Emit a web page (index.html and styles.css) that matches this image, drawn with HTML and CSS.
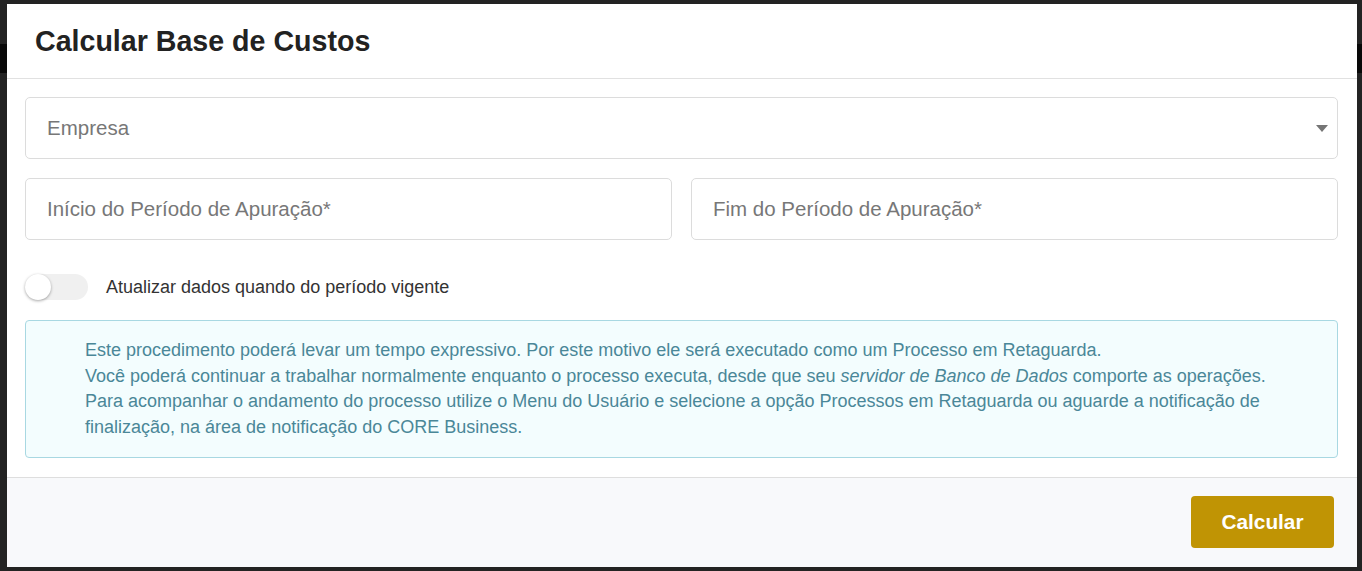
FILE: index.html
```html
<!DOCTYPE html>
<html lang="pt-BR">
<head>
<meta charset="utf-8">
<title>Calcular Base de Custos</title>
<link rel="stylesheet" href="styles.css">
</head>
<body>
<div class="backdrop">
  <div class="band"></div>
</div>
<div class="modal">
  <div class="modal-header">
    <h1 class="modal-title">Calcular Base de Custos</h1>
  </div>
  <div class="modal-body">
    <div class="field select-field">
      <span class="placeholder">Empresa</span>
      <svg class="caret" width="12" height="7" viewBox="0 0 12 7"><path d="M0 0H12L6 7Z" fill="#757575"/></svg>
    </div>
    <div class="row">
      <div class="field"><span class="placeholder">Início do Período de Apuração*</span></div>
      <div class="field"><span class="placeholder">Fim do Período de Apuração*</span></div>
    </div>
    <div class="toggle-row">
      <span class="switch"><span class="knob"></span></span>
      <span class="toggle-label">Atualizar dados quando do período vigente</span>
    </div>
    <div class="alert">
      <p>Este procedimento poderá levar um tempo expressivo. Por este motivo ele será executado como um Processo em Retaguarda.</p>
      <p>Você poderá continuar a trabalhar normalmente enquanto o processo executa, desde que seu <em>servidor de Banco de Dados</em> comporte as operações.</p>
      <p>Para acompanhar o andamento do processo utilize o Menu do Usuário e selecione a opção Processos em Retaguarda ou aguarde a notificação de finalização, na área de notificação do CORE Business.</p>
    </div>
  </div>
  <div class="modal-footer">
    <button class="btn-primary" type="button">Calcular</button>
  </div>
</div>
</body>
</html>
```
FILE: styles.css
```css
* { box-sizing: border-box; }
html, body {
  margin: 0;
  padding: 0;
  width: 1362px;
  height: 571px;
  overflow: hidden;
}
body {
  background: #222222;
  font-family: "Liberation Sans", Arial, sans-serif;
  position: relative;
}
.backdrop {
  position: absolute;
  inset: 0;
  background: #232323;
}
.band {
  position: absolute;
  left: 0;
  right: 0;
  top: 44px;
  height: 29px;
  background: #080808;
}
.modal {
  position: absolute;
  left: 7px;
  top: 4px;
  width: 1350px;
  height: 563px;
  background: #ffffff;
  display: flex;
  flex-direction: column;
}
.modal-header {
  height: 75px;
  border-bottom: 1px solid #e1e1e1;
  padding: 0 28px;
  display: flex;
  align-items: center;
}
.modal-title {
  margin: 0;
  font-size: 28.6px;
  font-weight: bold;
  color: #222222;
  padding-top: 1px;
}
.modal-body {
  padding: 18px 19px 19px 18px;
  display: flex;
  flex-direction: column;
}
.field {
  height: 62px;
  border: 1px solid #dcdcdc;
  border-radius: 5px;
  display: flex;
  align-items: center;
  padding: 0 21px;
  flex: 1;
}
.select-field {
  justify-content: space-between;
  padding-right: 9px;
  flex: none;
}
.placeholder {
  font-size: 20.5px;
  color: #777777;
}
.caret { margin-top: 1px; }
.row {
  display: flex;
  gap: 19px;
  margin-top: 19px;
}
.toggle-row {
  display: flex;
  align-items: center;
  margin-top: 33px;
  height: 27px;
}
.switch {
  width: 63px;
  height: 26px;
  border-radius: 13px;
  background: #f0f0f0;
  position: relative;
  display: inline-block;
}
.knob {
  position: absolute;
  left: 0;
  top: 0;
  width: 26px;
  height: 26px;
  border-radius: 50%;
  background: #ffffff;
  box-shadow: 0 1px 3px rgba(0,0,0,0.35);
}
.toggle-label {
  margin-left: 18px;
  font-size: 18px;
  color: #333333;
  padding-top: 2px;
}
.alert {
  margin-top: 20px;
  height: 138px;
  border: 1px solid #a8d8e2;
  border-radius: 4px;
  background: #f3fdfe;
  padding: 17px 40px 0 59px;
  color: #4a8798;
  font-size: 18px;
  line-height: 25.5px;
}
.alert p { margin: 0; }
.alert em { font-style: italic; }
.modal-footer {
  flex: 1;
  border-top: 1px solid #dedede;
  background: #f8f9fb;
  display: flex;
  justify-content: flex-end;
  align-items: flex-start;
  padding: 18px 23px 0 0;
}
.btn-primary {
  width: 143px;
  height: 52px;
  border: none;
  border-radius: 4px;
  background: #c09404;
  color: #ffffff;
  font-family: "Liberation Sans", Arial, sans-serif;
  font-size: 20.8px;
  font-weight: bold;
}
```
